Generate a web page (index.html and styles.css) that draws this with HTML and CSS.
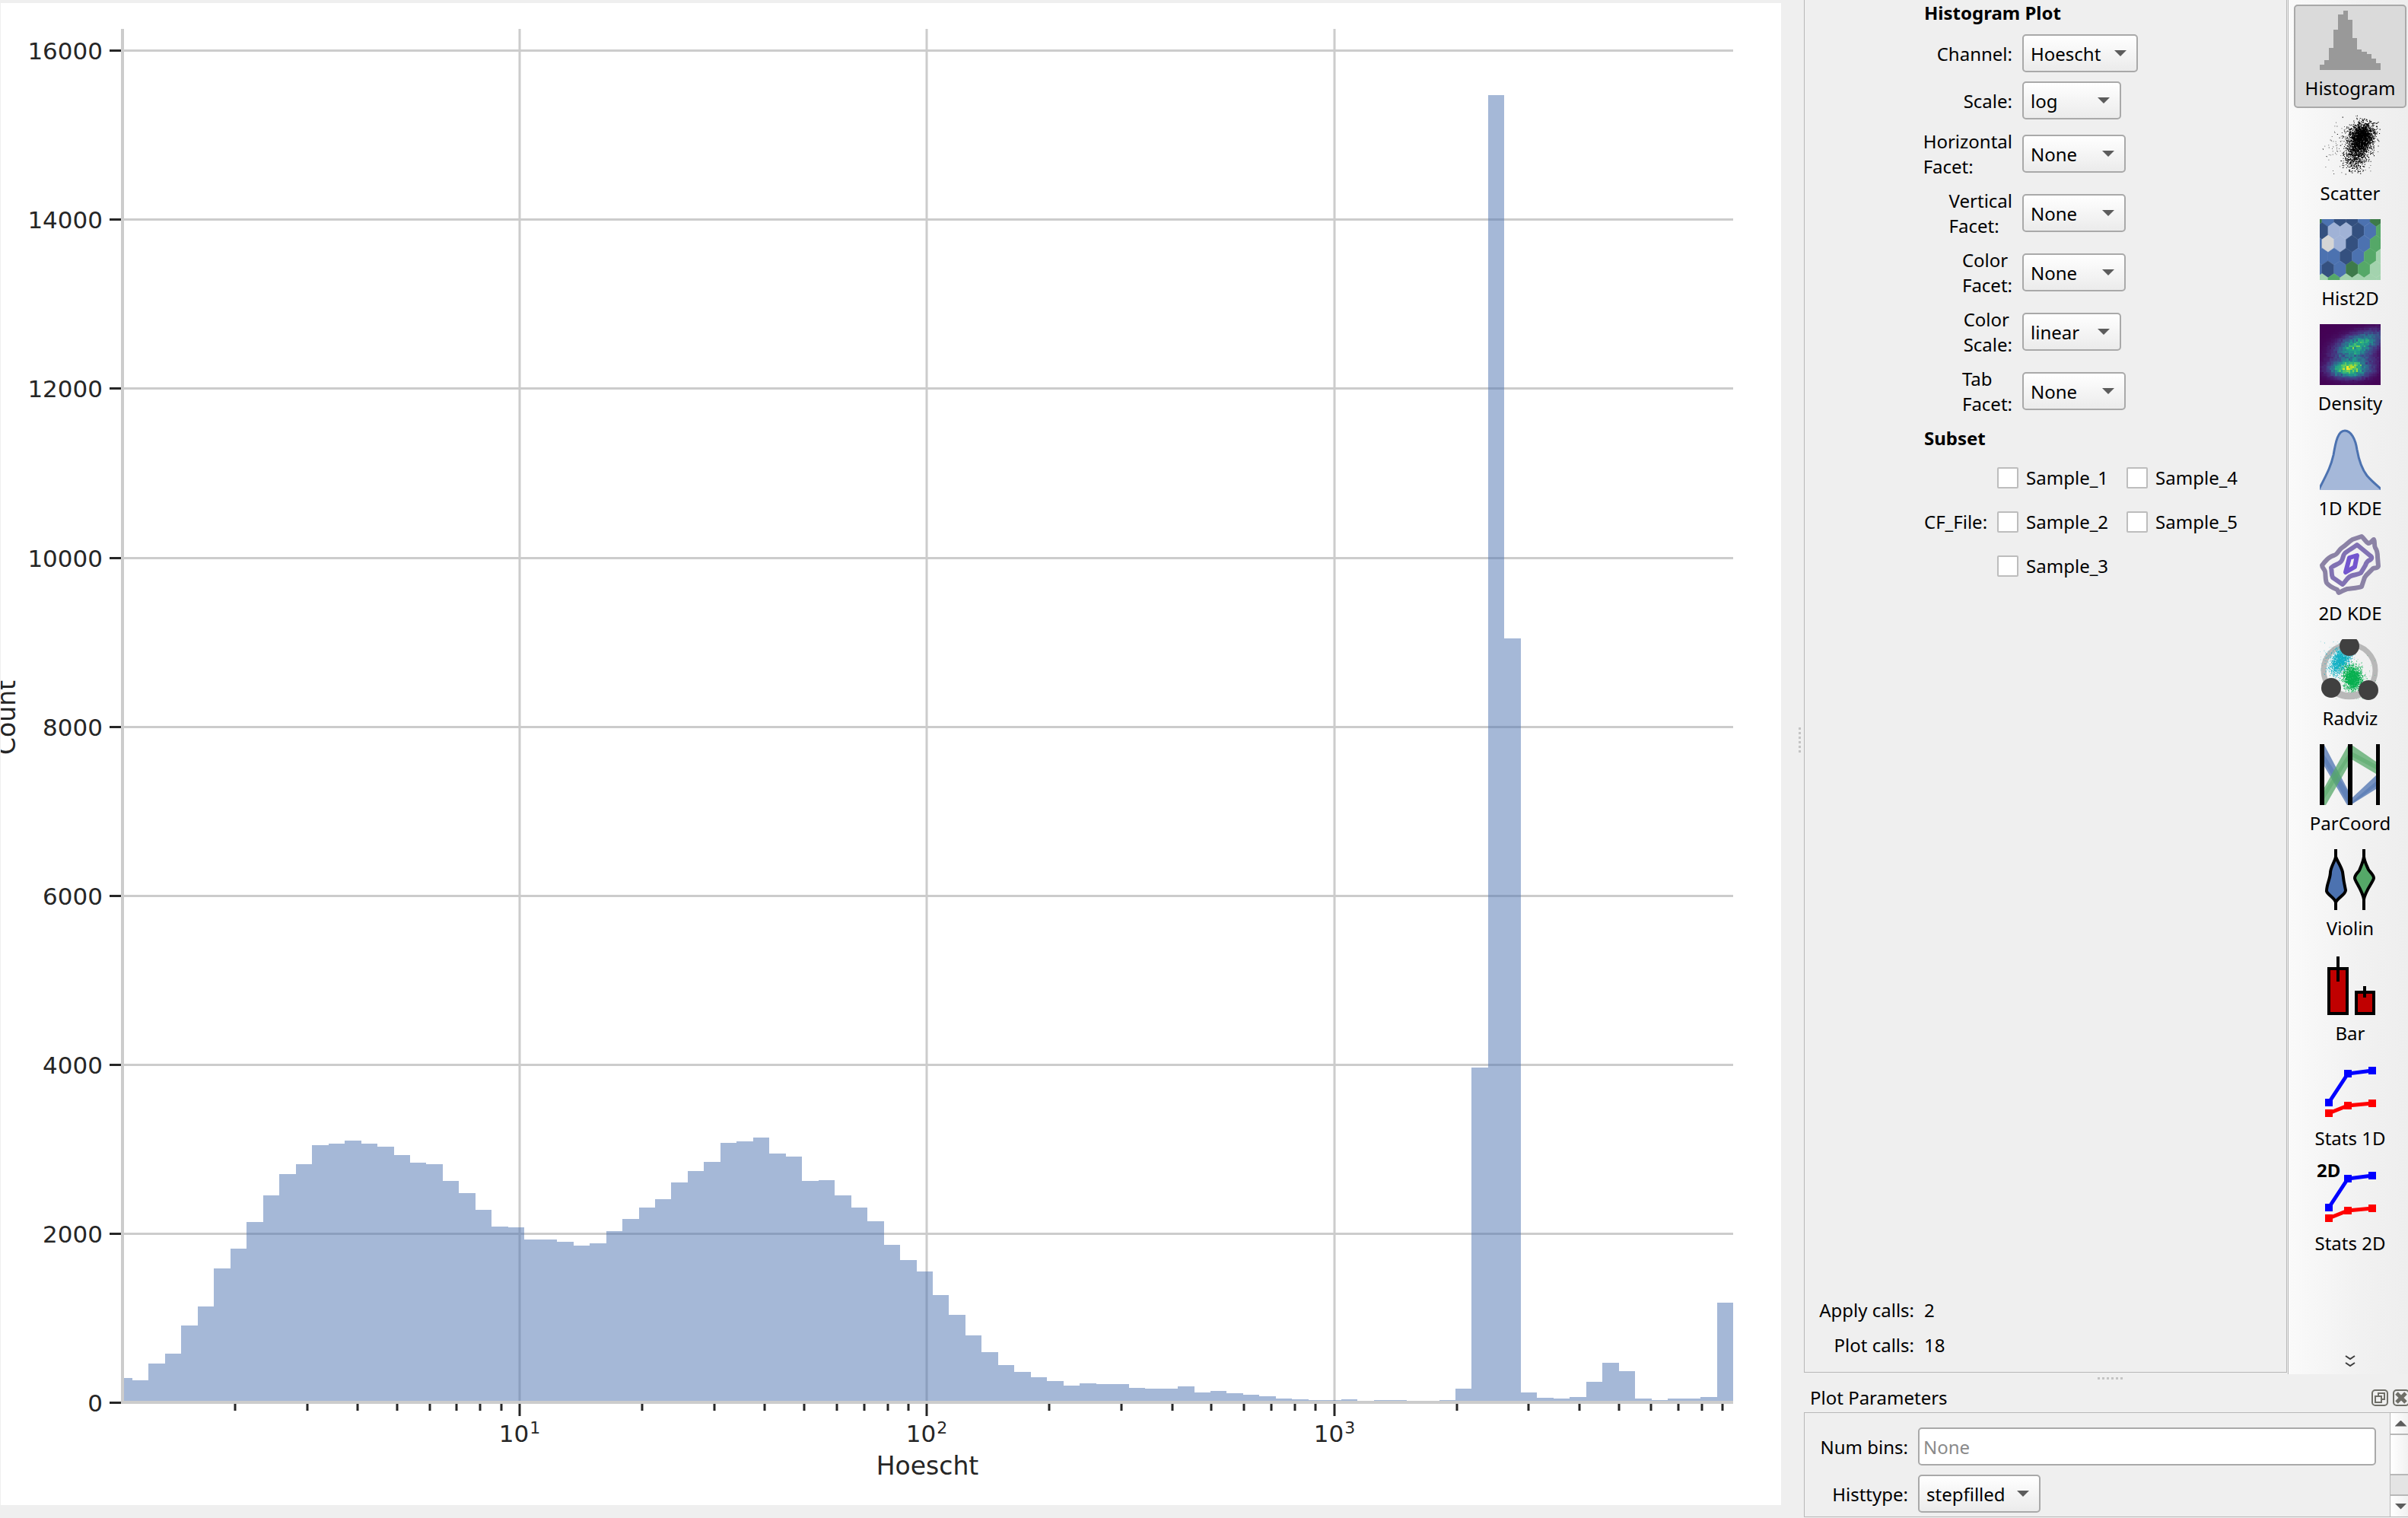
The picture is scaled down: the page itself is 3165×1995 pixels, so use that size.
FILE: index.html
```html
<!DOCTYPE html>
<html lang="en">
<head>
<meta charset="utf-8">
<title>Histogram Plot</title>
<link rel="stylesheet" href="styles.css">
</head>
<body>
<div class="workspace">
  <main class="plot">
    <svg id="chart" class="chart" viewBox="1 4 2340 1974" role="img" aria-label="Histogram of Hoescht counts"></svg>
  </main>

  <div class="splitter splitter-vertical"><i></i><i></i><i></i><i></i><i></i><i></i></div>

  <aside class="side">
    <div class="side-top">
      <section class="settings">
        <form class="form">
          <h2>Histogram Plot</h2>
          <label for="channel">Channel:</label>
          <span class="select w-channel"><select id="channel"><option>Hoescht</option></select></span>
          <label for="scale">Scale:</label>
          <span class="select w-scale"><select id="scale"><option>log</option></select></span>
          <label for="hfacet">Horizontal<br>Facet:</label>
          <span class="select w-facet"><select id="hfacet"><option>None</option></select></span>
          <label for="vfacet">Vertical<br>Facet:</label>
          <span class="select w-facet"><select id="vfacet"><option>None</option></select></span>
          <label for="cfacet">Color<br>Facet:</label>
          <span class="select w-facet"><select id="cfacet"><option>None</option></select></span>
          <label for="cscale">Color<br>Scale:</label>
          <span class="select w-scale"><select id="cscale"><option>linear</option></select></span>
          <label for="tfacet">Tab<br>Facet:</label>
          <span class="select w-facet"><select id="tfacet"><option>None</option></select></span>
          <h2>Subset</h2>
        </form>
        <div class="subset" role="group" aria-labelledby="cf-file">
          <span id="cf-file">CF_File:</span>
          <div class="samples">
            <label><input type="checkbox">Sample_1</label>
            <label><input type="checkbox">Sample_4</label>
            <label><input type="checkbox">Sample_2</label>
            <label><input type="checkbox">Sample_5</label>
            <label><input type="checkbox">Sample_3</label>
          </div>
        </div>
        <dl class="calls">
          <dt>Apply calls:</dt><dd>2</dd>
          <dt>Plot calls:</dt><dd>18</dd>
        </dl>
      </section>

      <nav class="toolbar" aria-label="Plot types">
        <button type="button" class="tool" aria-pressed="true">
          <svg viewBox="0 0 80 80"><path fill="#999" d="M0 80V73H6V67H12V51H18V27H24V7H31V2H37V14H43V38H49V53H55V56H62V59H68V65H74V71H80V80Z"/></svg>
          <span>Histogram</span>
        </button>
        <button type="button" class="tool">
          <svg id="icon-scatter" viewBox="0 0 80 80"></svg>
          <span>Scatter</span>
        </button>
        <button type="button" class="tool">
          <svg id="icon-hex" class="clip" viewBox="0 0 80 80"></svg>
          <span>Hist2D</span>
        </button>
        <button type="button" class="tool">
          <svg id="icon-density" class="clip" viewBox="0 0 80 80" shape-rendering="crispEdges"></svg>
          <span>Density</span>
        </button>
        <button type="button" class="tool">
          <svg class="clip" viewBox="0 0 80 80"><path fill="#a5b8d9" d="M0 77C12 54 15 47 18 34C21 16 24 2 33 2C41 2 47 13 49 27C52 44 56 53 62 61C68 68 74 73 80 78V80H0Z"/><path fill="none" stroke="#4c72b0" stroke-width="3" d="M-1 79C12 54 15 47 18 34C21 16 24 2 33 2C41 2 47 13 49 27C52 44 56 53 62 61C68 68 74 73 81 79"/></svg>
          <span>1D KDE</span>
        </button>
        <button type="button" class="tool">
          <svg viewBox="0 0 80 80" fill="none" stroke-linejoin="round"><path stroke="#8b82a5" stroke-width="6" d="M55 3C58 5 60 10 64 12C67 12 69 8 71 7C73 10 71 14 73 18C76 22 76 26 76 30L77 42C76 45 73 44 70 45C67 49 62 52 59 57L55 69C50 71 42 71 36 72C32 73 28 76 25 77C24 76 24 74 23 73C18 71 12 68 9 64C7 59 8 54 7 49C6 46 3 44 3 41C6 37 10 32 14 30C17 28 20 28 22 26C25 23 26 20 29 18C34 15 38 10 43 7Z"/><path stroke="#8172b3" stroke-width="6" d="M49 14L66 28C69 30 69 32 66 34C62 35 61 38 60 41L54 51C49 54 43 53 39 56C35 59 33 64 30 66L17 57C15 53 16 48 15 44C19 40 25 40 28 36C31 33 30 28 33 25C38 21 44 18 49 14Z"/><path stroke="#7356cf" stroke-width="6" d="M39 31L49 28L46 43L34 50Z"/></svg>
          <span>2D KDE</span>
        </button>
        <button type="button" class="tool">
          <svg class="clip-top" viewBox="0 0 80 80"><circle cx="39" cy="41" r="34" fill="none" stroke="#b8b8b8" stroke-width="7"/><g id="icon-radviz"></g><path stroke="#b8b8b8" stroke-width="9" fill="none" d="M20 69A34 34 0 0 0 58 69"/><g fill="#404040"><circle cx="39" cy="9" r="13"/><circle cx="15" cy="64" r="13"/><circle cx="64" cy="67" r="13"/></g></svg>
          <span>Radviz</span>
        </button>
        <button type="button" class="tool">
          <svg viewBox="0 0 80 80"><g fill="#4c72b0" fill-opacity=".75"><path d="M6 1L38 62V80H36L6 29Z"/><path d="M6 14L38 64V79L6 24Z" fill-opacity=".5"/><path d="M42 71L74 41V59L42 79Z"/><path d="M42 76L74 49V55L42 79Z" fill-opacity=".5"/></g><g fill="#55a868" fill-opacity=".75"><path d="M6 57L38 0V28L8 80H6Z"/><path d="M6 62L38 12V20L6 72Z" fill-opacity=".5"/><path d="M42 1L74 23V39L42 20Z"/><path d="M42 10L74 27V33L42 16Z" fill-opacity=".5"/></g><path d="M0 0h6v80H0zM37 0h6v80h-6zM74 0h5v80h-5z"/></svg>
          <span>ParCoord</span>
        </button>
        <button type="button" class="tool">
          <svg viewBox="0 0 80 80" stroke="#000" stroke-width="4"><path fill="#4c72b0" d="M21 0V10C20 16 15 22 14 30C14 39 9 46 9 55C10 60 20 64 21 70V80V70C23 64 34 60 34 54C32 45 31 39 30 30C28 22 23 16 21 10Z"/><path fill="#55a868" d="M58 0V10C57 17 54 23 52 28C50 31 46 34 46 38C46 42 56 54 58 66V80V66C60 54 71 42 71 38C71 34 66 30 64 27C62 22 59 17 58 10Z"/></svg>
          <span>Violin</span>
        </button>
        <button type="button" class="tool">
          <svg viewBox="0 0 80 80" stroke="#000" stroke-width="4" fill="#c00000"><path d="M12 19H36V78H12ZM48 50H71V78H48Z"/><path d="M24 3V36M59 42V57"/></svg>
          <span>Bar</span>
        </button>
        <button type="button" class="tool">
          <svg viewBox="0 0 80 80" fill="none" stroke-width="5"><path stroke="#00f" d="M12 57L37 19L69 15"/><path stroke="red" d="M12 71L37 61L69 58"/><path fill="#00f" d="M7 52h10v10H7zM32 14h10v10H32zM64 10h10v10H64z"/><path fill="red" d="M7 66h10v10H7zM32 56h10v10H32zM64 53h10v10H64z"/></svg>
          <span>Stats 1D</span>
        </button>
        <button type="button" class="tool">
          <svg viewBox="0 0 80 80" fill="none" stroke-width="5"><path stroke="#00f" d="M12 57L37 19L69 15"/><path stroke="red" d="M12 71L37 61L69 58"/><path fill="#00f" d="M7 52h10v10H7zM32 14h10v10H32zM64 10h10v10H64z"/><path fill="red" d="M7 66h10v10H7zM32 56h10v10H32zM64 53h10v10H64z"/><text class="icon-text" x="-4" y="17">2D</text></svg>
          <span>Stats 2D</span>
        </button>
        <button type="button" class="more" aria-label="More plot types">
          <svg viewBox="0 0 14 18" fill="none" stroke="#3c3c3c" stroke-width="2"><path d="M1 2L7 6L13 2M1 11L7 15L13 11"/></svg>
        </button>
      </nav>
    </div>

    <div class="splitter splitter-horizontal"><i></i><i></i><i></i><i></i><i></i><i></i></div>

    <section class="dock">
      <header class="dock-title">
        <h3>Plot Parameters</h3>
        <button type="button" aria-label="Float"><svg viewBox="0 0 22 22" fill="none" stroke="#6f6f68" stroke-width="2"><rect x="1" y="1" width="20" height="20" rx="4"/><path d="M5 9h8v8H5zM9 9V5h8v8h-4"/></svg></button>
        <button type="button" aria-label="Close"><svg viewBox="0 0 22 22" fill="none" stroke="#6f6f68" stroke-width="2"><rect x="1" y="1" width="20" height="20" rx="4"/><path stroke-width="5" d="M5 5L17 17M17 5L5 17"/></svg></button>
      </header>
      <div class="dock-body">
        <form class="params">
          <label for="bins">Num bins:</label>
          <input id="bins" type="text" placeholder="None">
          <label for="histtype">Histtype:</label>
          <span class="select w-histtype"><select id="histtype"><option>stepfilled</option></select></span>
        </form>
        <div class="scrollbar">
          <button type="button" aria-label="Scroll up" class="up"></button>
          <div class="thumb"></div>
          <div class="trough"></div>
          <button type="button" aria-label="Scroll down" class="down"></button>
        </div>
      </div>
    </section>
  </aside>
</div>
<script src="app.js"></script>
</body>
</html>
```
FILE: styles.css
```css
* { box-sizing: border-box; }

body {
  margin: 0;
  background: #efefef;
  color: #000;
  font: 24px/33px "Noto Sans", sans-serif;
}

h2, h3, dl, dd { margin: 0; font-size: 24px; line-height: 33px; }
h3 { font-weight: 400; }
button, input, select { font: inherit; color: inherit; margin: 0; }
button { border: 0; background: none; padding: 0; }

.workspace {
  display: grid;
  grid-template-columns: minmax(0, 1fr) 30px 794px;
  min-height: 100vh;
}

/* Plot */
.plot { padding: 4px 0 0 1px; }
.chart { display: block; width: 100%; height: auto; background: #fff; }
.chart text { font-family: "DejaVu Sans", sans-serif; font-size: 31px; fill: #262626; }
.chart .axis-title { font-size: 33px; }
.chart .exp { font-size: 22px; }
.grid { stroke: #ccc; stroke-width: 3; }
.spine { stroke: #ccc; stroke-width: 4; }
.tick { stroke: #262626; stroke-width: 3; }
.bars { fill: #4c72b0; fill-opacity: .5; }

/* Splitters */
.splitter { display: flex; gap: 3px; }
.splitter i { width: 3px; height: 3px; background: #c4c4c4; }
.splitter-vertical {
  flex-direction: column;
  justify-content: center;
  align-items: flex-end;
  padding: 0 4px 50px 0;
}
.splitter-horizontal {
  height: 11px;
  justify-content: center;
  align-items: center;
  padding-left: 10px;
}

/* Side */
.side { display: flex; flex-direction: column; overflow: hidden; }
.side-top { display: flex; flex: 1; gap: 1px; }

.settings {
  flex: 1;
  display: flex;
  flex-direction: column;
  margin-bottom: 2px;
  padding: 0 24px 19px 19px;
  border: 1px solid #b8b8b8;
  border-top: 0;
}
.form {
  display: grid;
  grid-template-columns: 116px 1fr;
  gap: 12px 13px;
  align-items: center;
  margin-left: 138px;
}
.form h2 { grid-column: 1 / -1; }
.form label { justify-self: end; }

.select { position: relative; display: block; height: 50px; }
.select select {
  width: 100%;
  height: 50px;
  padding: 0 9px;
  appearance: none;
  border: 2px solid #a9a9a9;
  border-radius: 5px;
  background: linear-gradient(#fff, #ebebeb);
}
.select::after {
  content: "";
  position: absolute;
  right: 15px;
  top: 21px;
  width: 16px;
  height: 8px;
  background: #5c5c5c;
  clip-path: polygon(0 0, 100% 0, 50% 100%);
  pointer-events: none;
}
.w-channel { width: 152px; }
.w-scale { width: 130px; }
.w-facet { width: 136px; }
.w-histtype { width: 161px; }

.subset {
  display: flex;
  align-items: center;
  gap: 13px;
  margin: 19px 0 0 138px;
}
.samples {
  display: grid;
  grid-template-columns: repeat(2, 146px);
  gap: 25px 24px;
}
.samples label { display: flex; align-items: center; gap: 10px; }
.samples input {
  appearance: none;
  flex: none;
  width: 28px;
  height: 28px;
  border: 2px solid #bdbdbd;
  border-radius: 2px;
  background: #fff;
}

.calls {
  display: grid;
  grid-template-columns: 125px 1fr;
  gap: 13px;
  margin-top: auto;
}
.calls dt { text-align: right; }

/* Toolbar */
.toolbar {
  display: flex;
  flex-direction: column;
  gap: 2px;
  width: 158px;
  padding: 6px 2px 8px 7px;
  border-left: 1px solid #b8b8b8;
  background: linear-gradient(90deg, #fafafa, #f1f1f1 60%, #eee);
}
.tool {
  display: flex;
  flex-direction: column;
  align-items: center;
  gap: 7px;
  height: 136px;
  padding: 4px 0;
  border: 2px solid transparent;
  border-radius: 5px;
}
.tool svg { width: 80px; height: 80px; overflow: visible; }
.tool svg.clip, .tool svg.clip-top { overflow: hidden; }
.tool[aria-pressed="true"] { background: #dadada; border-color: #a9a9a9; }
.icon-text { font-weight: 700; font-size: 24px; fill: #000; }
.more { margin: auto auto 0; line-height: 0; }
.more svg { width: 14px; height: 18px; }

/* Dock */
.dock { padding-bottom: 1px; }
.dock-title {
  display: flex;
  align-items: center;
  gap: 6px;
  height: 39px;
  margin-right: -2px;
  padding-left: 8px;
}
.dock-title h3 { flex: 1; }
.dock-title svg { display: block; width: 22px; height: 22px; }

.dock-body {
  display: flex;
  border: 1px solid #b8b8b8;
  border-right: 0;
}
.params {
  flex: 1;
  display: grid;
  grid-template-columns: 116px 1fr;
  gap: 12px 13px;
  align-items: center;
  padding: 19px 18px 5px 20px;
}
.params label { text-align: right; }
.params input {
  width: 100%;
  height: 50px;
  padding: 0 5px;
  border: 2px solid #a9a9a9;
  border-radius: 5px;
  background: #fff;
}
.params input::placeholder { color: #8a8a8a; opacity: 1; }

.scrollbar {
  display: flex;
  flex-direction: column;
  width: 28px;
  margin-right: -4px;
  border-left: 1px solid #b8b8b8;
}
.scrollbar button {
  display: grid;
  place-items: center;
  height: 27px;
  background: linear-gradient(90deg, #fff, #efefef);
}
.scrollbar button::before {
  content: "";
  width: 16px;
  height: 8px;
  background: #5c5c5c;
}
.up::before { clip-path: polygon(50% 0, 100% 100%, 0 100%); }
.down::before { clip-path: polygon(0 0, 100% 0, 50% 100%); }
.thumb {
  flex: 2;
  border: 2px solid #b8b8b8;
  border-width: 2px 0;
  background: linear-gradient(90deg, #fff, #efefef);
}
.trough { flex: 1; background: #e4e4e4; border-bottom: 2px solid #b8b8b8; }
```
FILE: app.js
```js
// Chart geometry, in viewBox units.
const LEFT = 161, RIGHT = 2278, TOP = 38, BASE = 1843;
const PER_COUNT = 222.1 / 2000;
const DECADE = 535.1, X10 = 683.3;
const BIN0 = 174, BIN_W = (RIGHT - BIN0) / 98;

// Bin heights in viewBox units above the baseline; the first bin is cut by the axis.
const first = 32;
const heights = [
  29, 51, 64, 101, 126, 176, 202, 237, 272, 300, 313, 338, 340, 344, 340, 336,
  325, 315, 313, 291, 275, 253, 231, 230, 214, 214, 211, 206, 209, 225, 241,
  256, 267, 289, 304, 316, 341, 343, 348, 327, 323, 291, 292, 272, 256, 238,
  207, 187, 172, 141, 115, 88, 66, 49, 40, 33, 28, 22, 25, 24, 24, 19, 18, 18,
  21, 13, 15, 12, 10, 8, 5, 4, 3, 3, 4, 2, 3, 3, 2, 2, 3, 18, 440, 1718, 1004,
  13, 6, 5, 7, 27, 52, 41, 5, 3, 5, 5, 7, 131
];

const line = (c, x1, y1, x2, y2) =>
  `<line class="${c}" x1="${x1}" y1="${y1}" x2="${x2}" y2="${y2}"/>`;

function drawChart() {
  let grid = "", ticks = "", labels = "";
  for (let v = 0; v <= 16000; v += 2000) {
    const y = Math.round(BASE - v * PER_COUNT) + 0.5;
    if (v) grid += line("grid", LEFT, y, RIGHT, y);
    ticks += line("tick", 144, y, 160, y);
    labels += `<text x="135" y="${y + 11}" text-anchor="end">${v}</text>`;
  }
  for (let e = 1; e <= 3; e++) {
    const x = Math.round(X10 + (e - 1) * DECADE);
    grid += line("grid", x, TOP, x, BASE);
    ticks += line("tick", x, BASE, x, 1861);
    labels += `<text x="${x}" y="1895" text-anchor="middle">10<tspan class="exp" dx="1" dy="-11">${e}</tspan></text>`;
  }
  for (let e = 0; e <= 3; e++) {
    for (let m = 2; m < 10; m++) {
      const x = Math.round(X10 + (e - 1 + Math.log10(m)) * DECADE);
      if (x < RIGHT) ticks += line("tick", x, BASE, x, 1854);
    }
  }
  let d = `M${LEFT} ${BASE}V${BASE - first}`;
  heights.forEach((h, i) => {
    d += `H${Math.round(BIN0 + i * BIN_W)}V${BASE - h}`;
  });
  d += `H${RIGHT}V${BASE}Z`;
  document.getElementById("chart").innerHTML =
    grid + `<path class="bars" d="${d}"/>` + ticks +
    line("spine", LEFT, TOP, LEFT, BASE + 2) + line("spine", LEFT, BASE, RIGHT, BASE) + labels +
    `<text class="axis-title" x="1219" y="1938" text-anchor="middle">Hoescht</text>` +
    `<text class="axis-title" transform="translate(20 943) rotate(-90)" text-anchor="middle">Count</text>`;
}

// Repeatable random numbers for the point-cloud icons.
let seed = 7;
const rnd = () => (seed = (seed * 16807) % 2147483647) / 2147483647;
const gauss = () => Math.sqrt(-2 * Math.log(rnd())) * Math.cos(2 * Math.PI * rnd());

function cloud(n, cx, cy, sx, sy, size, slant = 0) {
  let d = "";
  for (let i = 0; i < n; i++) {
    const v = gauss();
    const x = cx + gauss() * sx + v * slant, y = cy + v * sy;
    if (x < -2 || x > 79 || y < 0 || y > 79) continue;
    d += `M${x.toFixed(1)} ${y.toFixed(1)}h${size}v${size}h-${size}z`;
  }
  return d;
}

function drawScatter() {
  document.getElementById("icon-scatter").innerHTML =
    `<path d="${cloud(1500, 55, 28, 8, 9, 1.1, -1) + cloud(900, 49, 47, 8, 12, 1.1, -2) + cloud(180, 38, 44, 17, 16, 0.8)}"/>`;
}

function drawHex() {
  const c = { n: "#34507f", b: "#4c72b0", l: "#a0b2d6", w: "#d5d5d5", d: "#3d7a4a", g: "#55a868", p: "#a3d3ae" };
  const rows = ["dbnnbd", "nllnbg", "bwlnbg", "bbnbgp", "bnbdgp", "pgpppp"];
  let out = "";
  rows.forEach((row, r) => {
    [...row].forEach((k, i) => {
      const x = (r % 2 ? 3 : -5) + i * 15.8, y = -1.3 + r * 16.8;
      out += `<path fill="${c[k]}" stroke="${c[k]}" stroke-width=".4" d="M${x} ${y - 11.2}l7.9 5.6v11.2l-7.9 5.6l-7.9-5.6v-11.2z"/>`;
    });
  });
  document.getElementById("icon-hex").innerHTML = out;
}

function drawDensity() {
  const stops = [[68, 1, 84], [72, 40, 120], [62, 74, 137], [49, 104, 142], [38, 130, 142], [31, 158, 137], [53, 183, 121], [109, 205, 89], [180, 222, 44], [253, 231, 37]];
  const blob = (x, y, cx, cy, sx, sy, a) => {
    const u = (x - cx) * Math.cos(a) + (y - cy) * Math.sin(a);
    const v = -(x - cx) * Math.sin(a) + (y - cy) * Math.cos(a);
    return Math.exp(-(u * u) / (2 * sx * sx) - (v * v) / (2 * sy * sy));
  };
  let out = "";
  for (let r = 0; r < 32; r++) {
    for (let q = 0; q < 32; q++) {
      const x = q * 2.5 + 1.2, y = r * 2.5 + 1.2;
      let f = 0.76 * blob(x, y, 38, 59, 16, 7, 0) + 0.48 * blob(x, y, 54, 24, 20, 8, -0.35) + 0.32 * blob(x, y, 46, 41, 17, 14, 0);
      f = Math.max(0, Math.min(0.999, f * (1 + 0.14 * gauss())));
      const t = f * 9, k = Math.floor(t);
      const rgb = stops[k].map((s, j) => Math.round(s + (stops[k + 1][j] - s) * (t - k)));
      out += `<rect x="${q * 2.5}" y="${r * 2.5}" width="2.5" height="2.5" fill="rgb(${rgb})"/>`;
    }
  }
  document.getElementById("icon-density").innerHTML = out;
}

function drawRadviz() {
  document.getElementById("icon-radviz").innerHTML =
    `<path fill="#12b0c4" d="${cloud(1200, 27, 27, 6, 9, 1, -3)}"/>` +
    `<path fill="#12b0c4" opacity=".5" d="${cloud(200, 20, 25, 11, 11, 0.8)}"/>` +
    `<path fill="#08b050" d="${cloud(1500, 43, 51, 6, 8, 1, 1)}"/>` +
    `<path fill="#08b050" opacity=".5" d="${cloud(200, 48, 54, 12, 13, 0.8)}"/>`;
}

drawChart();
drawScatter();
drawHex();
drawDensity();
drawRadviz();
```
